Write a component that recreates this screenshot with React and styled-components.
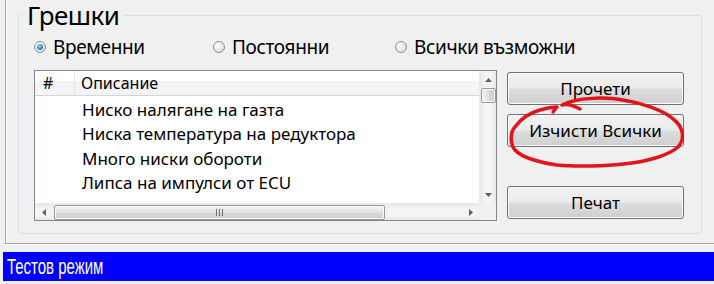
import React, { useState } from 'react'
import styled, { createGlobalStyle } from 'styled-components'

const Global = createGlobalStyle`
    html, body {
        margin: 0;
        padding: 0;
        background: #f0f0f0;
    }
    * {
        box-sizing: border-box;
    }
`;

const Page = styled.div`
    width: 714px;
    height: 284px;
    overflow: hidden;
    background: #f0f0f0;
    font-family: "Noto Sans", "Open Sans", sans-serif;
    color: #000;
`;

const OuterPanel = styled.div`
    margin-left: 5px;
    height: 244px;
    padding-left: 12px;
    border-left: 1px solid #a0a0a0;
    border-bottom: 1px solid #a0a0a0;
    box-shadow: inset 1px 0 0 #ffffff, 0 1px 0 #ffffff;
`;

const GroupBox = styled.fieldset`
    margin: 0;
    padding: 0 16px 0 15px;
    width: 684px;
    height: 234px;
    border: 1px solid #d5dfe5;
    border-radius: 3px;
`;

const Legend = styled.legend`
    margin-left: -12px;
    padding: 0 5px;
    height: 30px;
    font-size: 26px;
    line-height: 30px;
    letter-spacing: -0.6px;
    overflow: visible;
`;

const RadioRow = styled.div`
    display: flex;
    align-items: center;
    height: 20px;
    margin-top: 7px;
`;

const RadioOption = styled.label`
    display: flex;
    align-items: center;
    gap: 7px;
    width: ${p => p.$w ? `${p.$w}px` : 'auto'};
    font-size: 19px;
    line-height: 20px;
    letter-spacing: -0.35px;
    cursor: pointer;
`;

const RadioDot = styled.span`
    position: relative;
    flex: none;
    width: 12px;
    height: 12px;
    border-radius: 50%;
    border: 1px solid #8e8f8f;
    background: radial-gradient(circle at 35% 35%, #ffffff 0%, #e6e6e6 60%, #cfcfcf 100%);

    &::after {
        content: '';
        display: ${p => p.$on ? 'block' : 'none'};
        position: absolute;
        left: 2px;
        top: 2px;
        width: 6px;
        height: 6px;
        border-radius: 50%;
        background: radial-gradient(circle at 40% 35%, #9fd8f8 0%, #2e8ad0 55%, #1c5380 100%);
    }
`;

const Body = styled.div`
    display: flex;
    gap: 10px;
    margin-top: 13px;
`;

const ListBox = styled.div`
    width: 463px;
    height: 151px;
    border: 1px solid #828790;
    background: #fff;
    display: grid;
    grid-template-columns: 1fr 17px;
    grid-template-rows: 1fr 17px;
`;

const ListContent = styled.div`
    overflow: hidden;
`;

const HeaderRow = styled.div`
    display: grid;
    grid-template-columns: 40px 1fr;
    height: 25px;
    border-bottom: 1px solid #d5d5d5;
    background: linear-gradient(#ffffff 0%, #ffffff 40%, #f3f4f6 41%, #f3f4f6 100%);
    font-size: 16px;
    line-height: 24px;
`;

const HeaderCell = styled.div`
    padding-left: ${p => p.$pad}px;
    border-right: ${p => p.$sep ? '1px solid #e3e8ee' : 'none'};
`;

const Rows = styled.div`
    padding-top: 2px;
`;

const Row = styled.div`
    display: grid;
    grid-template-columns: 40px 1fr;
    height: 24.3px;
    font-size: 17px;
    line-height: 24px;
    white-space: nowrap;
`;

const Cell = styled.div`
    padding-left: ${p => p.$pad}px;
`;

const VScroll = styled.div`
    display: flex;
    flex-direction: column;
    align-items: center;
    background: linear-gradient(90deg, #e7e7e7, #f4f4f4 30%, #f4f4f4 70%, #e7e7e7);
    border-left: 1px solid #eaeaea;
`;

const HScroll = styled.div`
    display: flex;
    align-items: center;
    background: linear-gradient(#e7e7e7, #f4f4f4 30%, #f4f4f4 70%, #e7e7e7);
    border-top: 1px solid #eaeaea;
`;

const Corner = styled.div`
    background: #f0f0f0;
`;

const ArrowBox = styled.div`
    flex: none;
    width: 17px;
    height: 17px;
    display: flex;
    align-items: center;
    justify-content: center;
`;

const Spacer = styled.div`
    flex: 1;
`;

const VThumb = styled.div`
    width: 15px;
    height: 15px;
    border: 1px solid #979797;
    border-radius: 2px;
    background: linear-gradient(90deg, #f3f3f3, #e2e2e2 50%, #d6d6d6 51%, #cfcfcf);
    box-shadow: inset 0 0 0 1px #fafafa;
`;

const HThumb = styled.div`
    width: 331px;
    height: 15px;
    margin-left: 2px;
    border: 1px solid #979797;
    border-radius: 2px;
    background: linear-gradient(#f3f3f3, #e2e2e2 50%, #d6d6d6 51%, #cfcfcf);
    box-shadow: inset 0 0 0 1px #fafafa;
    display: flex;
    align-items: center;
    justify-content: center;
`;

const Grip = styled.span`
    width: 7px;
    height: 7px;
    background: repeating-linear-gradient(90deg, #6e6e6e 0 1px, transparent 1px 3px);
`;

const ButtonColumn = styled.div`
    position: relative;
    display: flex;
    flex-direction: column;
    padding-top: 2px;
`;

const Button = styled.button`
    width: 177px;
    height: 33px;
    margin-bottom: ${p => p.$gap || 0}px;
    border: 1px solid #707070;
    border-radius: 3px;
    background: linear-gradient(#f2f2f2 0%, #ebebeb 48%, #dddddd 52%, #cfcfcf 100%);
    box-shadow: inset 0 0 0 1px #fcfcfc;
    font-family: inherit;
    font-size: 17px;
    color: #000;
    padding: 0;
    cursor: pointer;
`;

const Scribble = styled.svg`
    position: absolute;
    left: 0;
    top: 0;
    pointer-events: none;
`;

const StatusBar = styled.div`
    margin: 8px 0 0 3px;
    height: 29px;
    background: #0000ff;
    color: #fff;
    padding-left: 4px;
    font-family: "Liberation Sans", sans-serif;
    font-size: 22px;
    line-height: 29px;
`;

const StatusText = styled.span`
    display: inline-block;
    transform: scaleX(0.68);
    transform-origin: left center;
    white-space: nowrap;
`;

const Arrow = ({ dir }) => {
    const pts = {
        up: '0,4 3.5,0 7,4',
        down: '0,0 3.5,4 7,0',
        left: '4,0 0,3.5 4,7',
        right: '0,0 4,3.5 0,7',
    }[dir];
    const vert = dir === 'up' || dir === 'down';
    return (
        <svg width={vert ? 7 : 4} height={vert ? 4 : 7}>
            <polygon points={pts} fill="#606060" />
        </svg>
    );
};

const errors = [
    'Ниско налягане на газта',
    'Ниска температура на редуктора',
    'Много ниски обороти',
    'Липса на импулси от ECU',
];

const modes = [
    { id: 'temp', label: 'Временни', w: 179 },
    { id: 'perm', label: 'Постоянни', w: 182 },
    { id: 'all', label: 'Всички възможни' },
];

const App = () => {
    const [mode, setmode] = useState('temp');

    return (
        <Page>
            <Global />
            <OuterPanel>
                <GroupBox>
                    <Legend>Грешки</Legend>
                    <RadioRow>
                        {modes.map(m => (
                            <RadioOption key={m.id} $w={m.w} onClick={() => setmode(m.id)}>
                                <RadioDot $on={mode === m.id} />
                                {m.label}
                            </RadioOption>
                        ))}
                    </RadioRow>
                    <Body>
                        <ListBox>
                            <ListContent>
                                <HeaderRow>
                                    <HeaderCell $pad={8} $sep>#</HeaderCell>
                                    <HeaderCell $pad={6}>Описание</HeaderCell>
                                </HeaderRow>
                                <Rows>
                                    {errors.map(e => (
                                        <Row key={e}>
                                            <Cell $pad={8}></Cell>
                                            <Cell $pad={7}>{e}</Cell>
                                        </Row>
                                    ))}
                                </Rows>
                            </ListContent>
                            <VScroll>
                                <ArrowBox><Arrow dir="up" /></ArrowBox>
                                <VThumb />
                                <Spacer />
                                <ArrowBox><Arrow dir="down" /></ArrowBox>
                            </VScroll>
                            <HScroll>
                                <ArrowBox><Arrow dir="left" /></ArrowBox>
                                <HThumb><Grip /></HThumb>
                                <Spacer />
                                <ArrowBox><Arrow dir="right" /></ArrowBox>
                            </HScroll>
                            <Corner />
                        </ListBox>
                        <ButtonColumn>
                            <Button $gap={9}>Прочети</Button>
                            <Button $gap={39}>Изчисти Всички</Button>
                            <Button>Печат</Button>
                            <Scribble width="180" height="100" viewBox="0 0 180 100">
                                <path
                                    d="M73,39 Q62,33 55,35 C70,27 100,27 116,30 C135,33 155,40 165,48 C176,56 179,68 171,77 C162,85 140,92 116,94 C100,96 70,97 50,95 C35,93 15,88 8,80 C3,74 3,62 8,57 C13,50 22,43 33,40 C40,38 46,37 50,37 L46,42"
                                    fill="none"
                                    stroke="#e3131c"
                                    strokeWidth="3.5"
                                    strokeLinecap="round"
                                    strokeLinejoin="round"
                                />
                            </Scribble>
                        </ButtonColumn>
                    </Body>
                </GroupBox>
            </OuterPanel>
            <StatusBar><StatusText>Тестов режим</StatusText></StatusBar>
        </Page>
    )
}

export default App;
